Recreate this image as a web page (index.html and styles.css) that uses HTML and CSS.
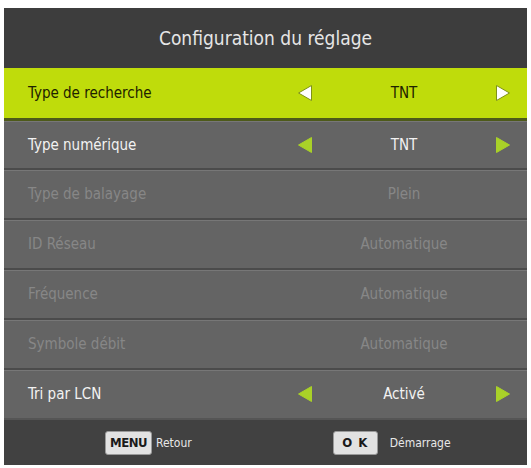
FILE: index.html
```html
<!DOCTYPE html>
<html lang="fr">
<head>
<meta charset="utf-8">
<title>Configuration du réglage</title>
<link rel="stylesheet" href="styles.css">
</head>
<body>
<div class="panel">
  <div class="title">Configuration du réglage</div>
  <ul class="rows">
    <li class="row active">
      <span class="label">Type de recherche</span>
      <svg class="arrow" viewBox="0 0 16 18"><polygon points="14.5,1.5 1.5,9 14.5,16.5"/></svg>
      <span class="value">TNT</span>
      <svg class="arrow" viewBox="0 0 16 18"><polygon points="1.5,1.5 14.5,9 1.5,16.5"/></svg>
    </li>
    <li class="row">
      <span class="label">Type numérique</span>
      <svg class="arrow" viewBox="0 0 16 18"><polygon points="14.5,1.5 1.5,9 14.5,16.5"/></svg>
      <span class="value">TNT</span>
      <svg class="arrow" viewBox="0 0 16 18"><polygon points="1.5,1.5 14.5,9 1.5,16.5"/></svg>
    </li>
    <li class="row disabled">
      <span class="label">Type de balayage</span>
      <span class="gap"></span>
      <span class="value">Plein</span>
      <span class="gap"></span>
    </li>
    <li class="row disabled">
      <span class="label">ID Réseau</span>
      <span class="gap"></span>
      <span class="value">Automatique</span>
      <span class="gap"></span>
    </li>
    <li class="row disabled">
      <span class="label">Fréquence</span>
      <span class="gap"></span>
      <span class="value">Automatique</span>
      <span class="gap"></span>
    </li>
    <li class="row disabled">
      <span class="label">Symbole débit</span>
      <span class="gap"></span>
      <span class="value">Automatique</span>
      <span class="gap"></span>
    </li>
    <li class="row">
      <span class="label">Tri par LCN</span>
      <svg class="arrow" viewBox="0 0 16 18"><polygon points="14.5,1.5 1.5,9 14.5,16.5"/></svg>
      <span class="value">Activé</span>
      <svg class="arrow" viewBox="0 0 16 18"><polygon points="1.5,1.5 14.5,9 1.5,16.5"/></svg>
    </li>
  </ul>
  <div class="footer">
    <div class="hint hint-back"><span class="key key-menu">MENU</span><span class="hint-text">Retour</span></div>
    <div class="hint hint-start"><span class="key key-ok">O K</span><span class="hint-text">Démarrage</span></div>
  </div>
</div>
</body>
</html>
```
FILE: styles.css
```css
html, body {
  margin: 0;
  padding: 0;
  background: #ffffff;
}

body {
  font-family: "DejaVu Sans Condensed", "DejaVu Sans", sans-serif;
  padding: 8px 4px 3px 4px;
}

.panel {
  width: 523px;
  background: #404040;
  display: flex;
  flex-direction: column;
}

.title {
  height: 60px;
  display: flex;
  align-items: center;
  justify-content: center;
  color: #e6e6e6;
  font-size: 19px;
  background: #3d3d3d;
}

.rows {
  list-style: none;
  margin: 0;
  padding: 0;
}

.row {
  height: 50px;
  box-sizing: border-box;
  display: grid;
  grid-template-columns: 1fr 16px 182px 16px;
  align-items: center;
  padding: 0 16px 0 24px;
  background: #646464;
  border-top: 2px solid #4b4b4b;
  box-shadow: inset 0 1px 0 #777777;
  color: #f2f2f2;
  font-size: 15px;
}

.row.active {
  background: #bfdc0b;
  color: #1e2200;
  border-top: none;
  box-shadow: none;
}

.row.active + .row {
  border-top: 3px solid #4e5a1a;
}

.label {
  white-space: nowrap;
}

.value {
  text-align: center;
  white-space: nowrap;
}

.row.disabled {
  color: #878787;
}

.arrow {
  width: 16px;
  height: 18px;
  display: block;
}

.arrow polygon {
  fill: #a9d128;
  stroke: #a9d128;
  stroke-width: 1;
  stroke-linejoin: round;
}

.row.active .arrow polygon {
  fill: #ffffff;
  stroke: #7f9218;
}

.footer {
  height: 47px;
  box-sizing: border-box;
  border-top: 2px solid #555555;
  background: #414141;
  display: flex;
  align-items: center;
  padding-left: 101px;
}

.hint {
  display: flex;
  align-items: center;
}

.hint-start {
  margin-left: 141px;
}

.key {
  height: 24px;
  box-sizing: border-box;
  display: flex;
  align-items: center;
  justify-content: center;
  background: #e2e2e2;
  border: 1px solid #9a9a9a;
  border-radius: 3px;
  color: #1a1a1a;
  font-weight: bold;
  font-size: 13px;
}

.key-menu {
  width: 47px;
  letter-spacing: -0.5px;
  margin-right: 4px;
}

.key-ok {
  width: 45px;
  letter-spacing: 1px;
  margin-right: 12px;
}

.hint-text {
  color: #e8e8e8;
  font-size: 12px;
}
```
